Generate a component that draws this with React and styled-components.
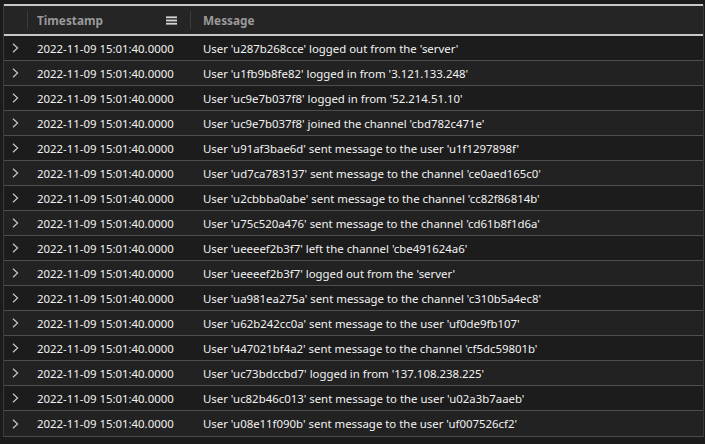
import styled, { createGlobalStyle } from "styled-components";

const GlobalStyle = createGlobalStyle`
  html, body {
    margin: 0;
    padding: 0;
    background: #1b1b1b;
  }
`;

const rows = [
  "User 'u287b268cce' logged out from the 'server'",
  "User 'u1fb9b8fe82' logged in from '3.121.133.248'",
  "User 'uc9e7b037f8' logged in from '52.214.51.10'",
  "User 'uc9e7b037f8' joined the channel 'cbd782c471e'",
  "User 'u91af3bae6d' sent message to the user 'u1f1297898f'",
  "User 'ud7ca783137' sent message to the channel 'ce0aed165c0'",
  "User 'u2cbbba0abe' sent message to the channel 'cc82f86814b'",
  "User 'u75c520a476' sent message to the channel 'cd61b8f1d6a'",
  "User 'ueeeef2b3f7' left the channel 'cbe491624a6'",
  "User 'ueeeef2b3f7' logged out from the 'server'",
  "User 'ua981ea275a' sent message to the channel 'c310b5a4ec8'",
  "User 'u62b242cc0a' sent message to the user 'uf0de9fb107'",
  "User 'u47021bf4a2' sent message to the channel 'cf5dc59801b'",
  "User 'uc73bdccbd7' logged in from '137.108.238.225'",
  "User 'uc82b46c013' sent message to the user 'u02a3b7aaeb'",
  "User 'u08e11f090b' sent message to the user 'uf007526cf2'",
];

const App = () => {
  return (
    <Wrapper>
      <GlobalStyle />
      <Grid>
        <Header>
          <HeadCell $w={24} />
          <HeadCell $w={163} $pad={9}>
            <span className="label">Timestamp</span>
            <MenuIcon viewBox="0 0 12 9">
              <rect x="0" y="0" width="12" height="2" />
              <rect x="0" y="3.5" width="12" height="2" />
              <rect x="0" y="7" width="12" height="2" />
            </MenuIcon>
          </HeadCell>
          <HeadCell $pad={12}>
            <span className="label">Message</span>
          </HeadCell>
        </Header>
        {rows.map((msg, i) => (
          <Row key={i} $odd={i % 2 === 1}>
            <Cell $w={24} $center>
              <Chevron viewBox="0 0 7 10">
                <path d="M1 0.8 L5.6 5 L1 9.2" />
              </Chevron>
            </Cell>
            <Cell $w={163} $pad={9}>
              2022-11-09 15:01:40.0000
            </Cell>
            <Cell $pad={12}>{msg}</Cell>
          </Row>
        ))}
      </Grid>
    </Wrapper>
  );
};
export default App;

const Wrapper = styled.div`
  width: 705px;
  height: 444px;
  padding-top: 4px;
  box-sizing: border-box;
  background: #1b1b1b;
  overflow: hidden;
  font-family: "Noto Sans", "Liberation Sans", sans-serif;
`;

const Grid = styled.div`
  margin-left: 3px;
  border-left: 1px solid #3a3a3a;
  border-right: 1px solid #3a3a3a;
  border-bottom: 1px solid #4a4a4a;
  width: 701px;
  box-sizing: border-box;
`;

const Header = styled.div`
  display: flex;
  height: 32px;
  background: #252525;
  border-top: 2px solid #c8c8c8;
  border-bottom: 2px solid #c8c8c8;
  box-sizing: border-box;
  align-items: center;
`;

const HeadCell = styled.div`
  display: flex;
  align-items: center;
  justify-content: space-between;
  box-sizing: border-box;
  height: 18px;
  padding: 0 13px 0 ${(p) => p.$pad ?? 0}px;
  ${(p) => (p.$w ? `width: ${p.$w}px; flex: none;` : "flex: 1;")}
  border-right: 1px solid #3c3c3c;

  &:last-child {
    border-right: none;
  }

  .label {
    color: #9a9a9a;
    font-weight: 700;
    font-size: 11.8px;
  }
`;

const MenuIcon = styled.svg`
  width: 11px;
  height: 9px;
  fill: #d4d4d4;
`;

const Row = styled.div`
  display: flex;
  align-items: center;
  height: 25px;
  box-sizing: border-box;
  border-bottom: 1px solid #4e4e4e;
  background: ${(p) => (p.$odd ? "#222222" : "#1c1c1c")};
  color: #f2f2f2;
  font-size: 11.4px;

  &:last-child {
    border-bottom: none;
  }
`;

const Cell = styled.div`
  box-sizing: border-box;
  white-space: nowrap;
  overflow: hidden;
  ${(p) => (p.$w ? `width: ${p.$w}px; flex: none;` : "flex: 1;")}
  padding-left: ${(p) => p.$pad ?? 0}px;
  display: flex;
  align-items: center;
  justify-content: ${(p) => (p.$center ? "center" : "flex-start")};
`;

const Chevron = styled.svg`
  width: 7px;
  height: 10px;
  margin-right: 2px;
  fill: none;
  stroke: #c8c8c8;
  stroke-width: 1.2;
`;
